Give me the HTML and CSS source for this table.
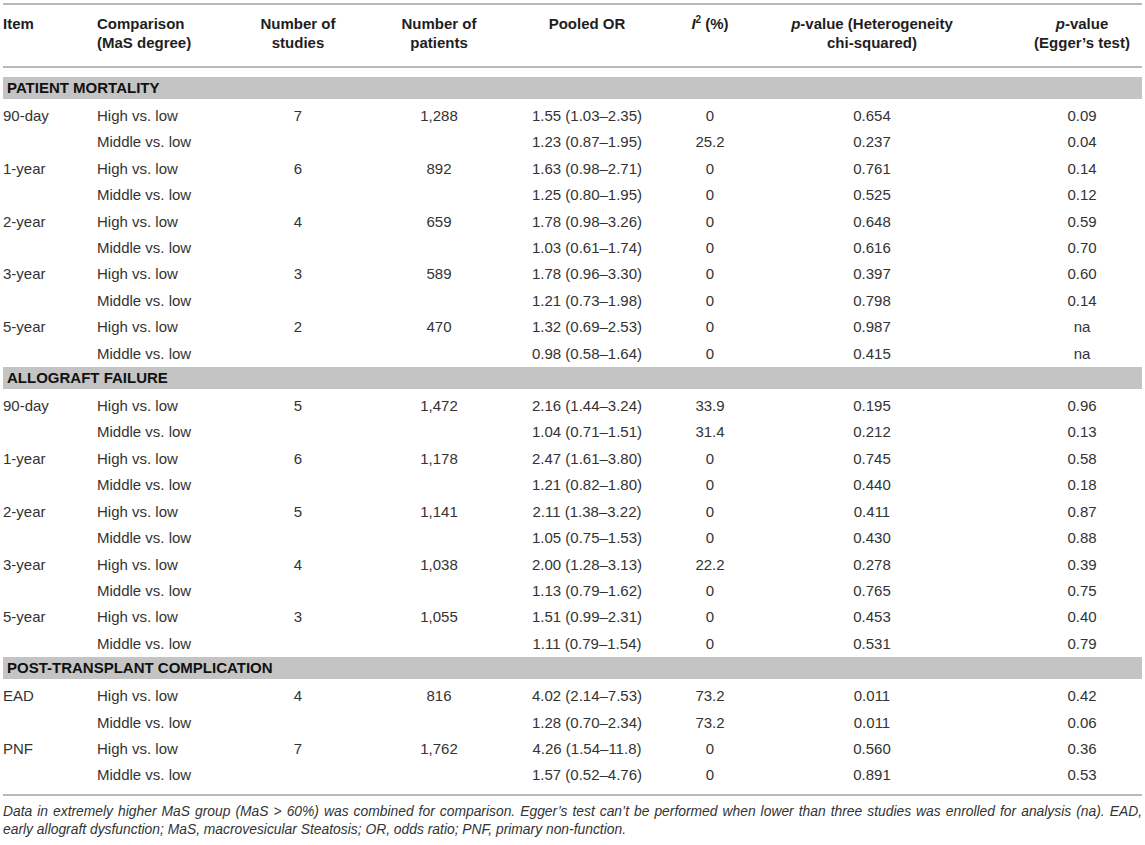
FILE: index.html
```html
<!DOCTYPE html>
<html lang="en">
<head>
<meta charset="utf-8">
<title>Meta-analysis table</title>
<link rel="stylesheet" href="styles.css">
</head>
<body>
<div class="wrap">
<table class="tbl">
  <colgroup>
    <col class="c1"><col class="c2"><col class="c3"><col class="c4"><col class="c5"><col class="c6"><col class="c7"><col class="c8">
  </colgroup>
  <thead>
    <tr>
      <th class="l">Item</th>
      <th class="l">Comparison<br>(MaS degree)</th>
      <th>Number of<br>studies</th>
      <th>Number of<br>patients</th>
      <th>Pooled OR</th>
      <th><i>I</i><sup>2</sup> (%)</th>
      <th><i>p</i>-value (Heterogeneity<br>chi-squared)</th>
      <th class="eg"><i>p</i>-value<br>(Egger’s test)</th>
    </tr>
  </thead>
  <tbody>
    <tr class="sec first"><td colspan="8"><div class="band">PATIENT MORTALITY</div></td></tr>
    <tr><td class="l">90-day</td><td class="l">High vs. low</td><td>7</td><td>1,288</td><td>1.55 (1.03–2.35)</td><td>0</td><td>0.654</td><td class="eg">0.09</td></tr>
    <tr><td class="l"></td><td class="l">Middle vs. low</td><td></td><td></td><td>1.23 (0.87–1.95)</td><td>25.2</td><td>0.237</td><td class="eg">0.04</td></tr>
    <tr><td class="l">1-year</td><td class="l">High vs. low</td><td>6</td><td>892</td><td>1.63 (0.98–2.71)</td><td>0</td><td>0.761</td><td class="eg">0.14</td></tr>
    <tr><td class="l"></td><td class="l">Middle vs. low</td><td></td><td></td><td>1.25 (0.80–1.95)</td><td>0</td><td>0.525</td><td class="eg">0.12</td></tr>
    <tr><td class="l">2-year</td><td class="l">High vs. low</td><td>4</td><td>659</td><td>1.78 (0.98–3.26)</td><td>0</td><td>0.648</td><td class="eg">0.59</td></tr>
    <tr><td class="l"></td><td class="l">Middle vs. low</td><td></td><td></td><td>1.03 (0.61–1.74)</td><td>0</td><td>0.616</td><td class="eg">0.70</td></tr>
    <tr><td class="l">3-year</td><td class="l">High vs. low</td><td>3</td><td>589</td><td>1.78 (0.96–3.30)</td><td>0</td><td>0.397</td><td class="eg">0.60</td></tr>
    <tr><td class="l"></td><td class="l">Middle vs. low</td><td></td><td></td><td>1.21 (0.73–1.98)</td><td>0</td><td>0.798</td><td class="eg">0.14</td></tr>
    <tr><td class="l">5-year</td><td class="l">High vs. low</td><td>2</td><td>470</td><td>1.32 (0.69–2.53)</td><td>0</td><td>0.987</td><td class="eg">na</td></tr>
    <tr><td class="l"></td><td class="l">Middle vs. low</td><td></td><td></td><td>0.98 (0.58–1.64)</td><td>0</td><td>0.415</td><td class="eg">na</td></tr>

    <tr class="sec"><td colspan="8"><div class="band">ALLOGRAFT FAILURE</div></td></tr>
    <tr><td class="l">90-day</td><td class="l">High vs. low</td><td>5</td><td>1,472</td><td>2.16 (1.44–3.24)</td><td>33.9</td><td>0.195</td><td class="eg">0.96</td></tr>
    <tr><td class="l"></td><td class="l">Middle vs. low</td><td></td><td></td><td>1.04 (0.71–1.51)</td><td>31.4</td><td>0.212</td><td class="eg">0.13</td></tr>
    <tr><td class="l">1-year</td><td class="l">High vs. low</td><td>6</td><td>1,178</td><td>2.47 (1.61–3.80)</td><td>0</td><td>0.745</td><td class="eg">0.58</td></tr>
    <tr><td class="l"></td><td class="l">Middle vs. low</td><td></td><td></td><td>1.21 (0.82–1.80)</td><td>0</td><td>0.440</td><td class="eg">0.18</td></tr>
    <tr><td class="l">2-year</td><td class="l">High vs. low</td><td>5</td><td>1,141</td><td>2.11 (1.38–3.22)</td><td>0</td><td>0.411</td><td class="eg">0.87</td></tr>
    <tr><td class="l"></td><td class="l">Middle vs. low</td><td></td><td></td><td>1.05 (0.75–1.53)</td><td>0</td><td>0.430</td><td class="eg">0.88</td></tr>
    <tr><td class="l">3-year</td><td class="l">High vs. low</td><td>4</td><td>1,038</td><td>2.00 (1.28–3.13)</td><td>22.2</td><td>0.278</td><td class="eg">0.39</td></tr>
    <tr><td class="l"></td><td class="l">Middle vs. low</td><td></td><td></td><td>1.13 (0.79–1.62)</td><td>0</td><td>0.765</td><td class="eg">0.75</td></tr>
    <tr><td class="l">5-year</td><td class="l">High vs. low</td><td>3</td><td>1,055</td><td>1.51 (0.99–2.31)</td><td>0</td><td>0.453</td><td class="eg">0.40</td></tr>
    <tr><td class="l"></td><td class="l">Middle vs. low</td><td></td><td></td><td>1.11 (0.79–1.54)</td><td>0</td><td>0.531</td><td class="eg">0.79</td></tr>

    <tr class="sec"><td colspan="8"><div class="band">POST-TRANSPLANT COMPLICATION</div></td></tr>
    <tr><td class="l">EAD</td><td class="l">High vs. low</td><td>4</td><td>816</td><td>4.02 (2.14–7.53)</td><td>73.2</td><td>0.011</td><td class="eg">0.42</td></tr>
    <tr><td class="l"></td><td class="l">Middle vs. low</td><td></td><td></td><td>1.28 (0.70–2.34)</td><td>73.2</td><td>0.011</td><td class="eg">0.06</td></tr>
    <tr><td class="l">PNF</td><td class="l">High vs. low</td><td>7</td><td>1,762</td><td>4.26 (1.54–11.8)</td><td>0</td><td>0.560</td><td class="eg">0.36</td></tr>
    <tr><td class="l"></td><td class="l">Middle vs. low</td><td></td><td></td><td>1.57 (0.52–4.76)</td><td>0</td><td>0.891</td><td class="eg">0.53</td></tr>
  </tbody>
</table>
<p class="note">Data in extremely higher MaS group (MaS &gt; 60%) was combined for comparison. Egger’s test can’t be performed when lower than three studies was enrolled for analysis (na). EAD, early allograft dysfunction; MaS, macrovesicular Steatosis; OR, odds ratio; PNF, primary non-function.</p>
</div>
</body>
</html>
```

FILE: styles.css
```css
html, body {
  margin: 0;
  padding: 0;
  background: #ffffff;
}

.wrap {
  width: 1139px;
  margin: 3px 0 0 3px;
  font-family: "Liberation Sans", Arial, Helvetica, sans-serif;
}

.tbl {
  width: 1139px;
  table-layout: fixed;
  border-collapse: separate;
  border-spacing: 0;
  font-size: 15px;
  color: #333333;
}

.c1 { width: 94px; }
.c2 { width: 143px; }
.c3 { width: 116px; }
.c4 { width: 166px; }
.c5 { width: 130px; }
.c6 { width: 116px; }
.c7 { width: 208px; }
.c8 { width: 166px; }

.tbl th {
  font-weight: bold;
  color: #1e1e1e;
  text-align: center;
  vertical-align: top;
  line-height: 19px;
  padding: 9px 0 14px 0;
  border-top: 2px solid #b9b9b9;
  border-bottom: 2px solid #b9b9b9;
  white-space: nowrap;
}

.tbl th sup {
  font-size: 10px;
  line-height: 0;
  vertical-align: 6px;
}

.tbl td {
  padding: 0;
  line-height: 26.4px;
  text-align: center;
  white-space: nowrap;
}

.tbl .l {
  text-align: left;
}

.tbl .eg {
  padding-left: 46px;
}

.tbl .sec td {
  padding: 0 0 4px 0;
  line-height: 22px;
}

.tbl .sec.first td {
  padding-top: 9px;
}

.band {
  background: #c4c4c4;
  height: 22px;
  line-height: 22px;
  padding-left: 4px;
  font-weight: bold;
  color: #111111;
  text-align: left;
}

.note {
  margin: 5px 0 0 0;
  padding-top: 6px;
  border-top: 2px solid #b9b9b9;
  font-size: 13.85px;
  line-height: 18.5px;
  font-style: italic;
  color: #333333;
  text-align: justify;
}
```
